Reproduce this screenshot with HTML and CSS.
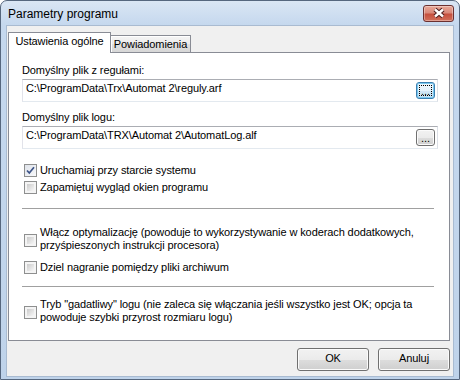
FILE: index.html
```html
<!DOCTYPE html>
<html lang="pl">
<head>
  <meta charset="UTF-8" />
  <title>Parametry programu</title>
  <link rel="stylesheet" href="styles.css">
</head>
<body>
  <div class="window">
    <div class="titlebar">
      <span class="title">Parametry programu</span>
      <button class="close" title="Zamknij">
        <svg width="29" height="15" viewBox="0 0 29 15">
          <path d="M11 3.5 L19 10.5 M19 3.5 L11 10.5" stroke="#4b1c1c" stroke-width="4.4" fill="none"/>
          <path d="M11 3.5 L19 10.5 M19 3.5 L11 10.5" stroke="#fff" stroke-width="2.4" fill="none"/>
        </svg>
      </button>
    </div>

    <div class="client">
      <div class="tabs">
        <div class="tab active">Ustawienia ogólne</div>
        <div class="tab">Powiadomienia</div>
      </div>

      <div class="panel">
        <label class="field-label">Domyślny plik z regułami:</label>
        <div class="path-box">
          <span class="value">C:\ProgramData\Trx\Automat 2\reguly.arf</span>
          <button class="browse focused">...</button>
        </div>

        <label class="field-label second">Domyślny plik logu:</label>
        <div class="path-box">
          <span class="value">C:\ProgramData\TRX\Automat 2\AutomatLog.alf</span>
          <button class="browse">...</button>
        </div>

        <div class="check-row first">
          <span class="box checked">
            <svg width="11" height="11" viewBox="0 0 11 11">
              <path d="M2 5.5 L4.3 8 L9 2.2" stroke="#3d5488" stroke-width="1.7" fill="none"/>
            </svg>
          </span>
          <span>Uruchamiaj przy starcie systemu</span>
        </div>
        <div class="check-row">
          <span class="box"></span>
          <span>Zapamiętuj wygląd okien programu</span>
        </div>

        <div class="sep"></div>

        <div class="check-row multi">
          <span class="box"></span>
          <span>Włącz optymalizację (powoduje to wykorzystywanie w koderach dodatkowych,<br>przyśpieszonych instrukcji procesora)</span>
        </div>
        <div class="check-row after-multi">
          <span class="box"></span>
          <span>Dziel nagranie pomiędzy pliki archiwum</span>
        </div>

        <div class="sep second"></div>

        <div class="check-row multi last">
          <span class="box"></span>
          <span>Tryb "gadatliwy" logu (nie zaleca się włączania jeśli wszystko jest OK; opcja ta<br>powoduje szybki przyrost rozmiaru logu)</span>
        </div>
      </div>

      <div class="actions">
        <button class="btn">OK</button>
        <button class="btn">Anuluj</button>
      </div>
    </div>
  </div>
</body>
</html>
```

FILE: styles.css
```css
* {
  box-sizing: border-box;
}
body {
  margin: 0;
  font-family: "Liberation Sans", Arial, sans-serif;
  font-size: 11px;
  letter-spacing: -0.1px;
  color: #000;
  background: #fff;
}
button {
  font-family: inherit;
  font-size: 11px;
  letter-spacing: inherit;
  color: #000;
  padding: 0;
  cursor: pointer;
}
.window {
  width: 460px;
  height: 380px;
  border: 1px solid #56677e;
  border-radius: 7px 7px 0 0;
  background: linear-gradient(#dae6f4, #c5d8ee 24px, #bfd3ea);
  padding: 0 5px 2px;
  display: flex;
  flex-direction: column;
}
.titlebar {
  height: 24px;
  flex: none;
  display: flex;
  align-items: flex-start;
  justify-content: space-between;
  padding-left: 2px;
}
.title {
  font-size: 12px;
  letter-spacing: 0;
  line-height: 24px;
  margin-top: 1px;
}
.close {
  width: 31px;
  height: 17px;
  margin-top: 4px;
  border: 1px solid #6b3030;
  border-radius: 3px;
  background: linear-gradient(#e9a898, #d9897a 45%, #c6503e 55%, #d2705b);
  box-shadow: inset 0 0 0 1px rgba(255, 255, 255, 0.35);
  display: flex;
  align-items: center;
  justify-content: center;
}
.close svg {
  display: block;
}
.client {
  flex: 1;
  background: #f0f0f0;
  border: 1px solid #a9bbd1;
  padding: 6px 3px 5px 1px;
  display: flex;
  flex-direction: column;
}

/* tabs */
.tabs {
  display: flex;
  align-items: flex-end;
  height: 21px;
  flex: none;
  position: relative;
  z-index: 1;
}
.tab {
  width: 80px;
  height: 17px;
  margin-bottom: 1px;
  border: 1px solid #898c95;
  border-bottom: none;
  border-left: none;
  background: linear-gradient(#f5f5f5, #ececec 50%, #e0e0e0 51%, #d7d7d7);
  box-shadow: inset 1px 1px 0 #fff;
  text-align: center;
  line-height: 13px;
  padding-top: 2px;
  white-space: nowrap;
}
.tab.active {
  width: 103px;
  height: 21px;
  margin-bottom: 0;
  border-left: 1px solid #898c95;
  background: #fff;
  box-shadow: none;
}
.panel {
  flex: none;
  height: 289px;
  margin-top: -1px;
  background: #fff;
  border: 1px solid #898c95;
  padding: 11px 11px 0 13px;
}

/* file fields */
.field-label {
  display: block;
  line-height: 13px;
  margin-bottom: 2px;
}
.field-label.second {
  margin-top: 9px;
}
.path-box {
  display: flex;
  align-items: flex-start;
  height: 23px;
  border: 1px solid;
  border-color: #abadb3 #dbdfe6 #e3e9ef #e2e3ea;
  padding-left: 3px;
}
.path-box .value {
  flex: 1;
  line-height: 17px;
  white-space: nowrap;
}
.browse {
  width: 19px;
  height: 17px;
  margin: 2px 2px 0 0;
  border: 1px solid #707070;
  border-radius: 3px;
  background: linear-gradient(#f2f2f2, #ebebeb 50%, #dddddd 51%, #cfcfcf);
  box-shadow: inset 0 0 0 1px #fbfbfb;
  line-height: 17px;
  text-align: center;
}
.browse.focused {
  border-color: #3c7fb1;
  background: linear-gradient(#f0f7fc, #e4f1fa 50%, #d2e7f6 51%, #c3dff3);
  box-shadow: inset 0 0 0 1px #79c9f0;
  outline: 1px dotted #000;
  outline-offset: -4px;
}

/* checkboxes */
.check-row {
  display: flex;
  align-items: center;
  margin: 4px 0 0 2px;
  line-height: 13px;
  white-space: nowrap;
}
.check-row.first {
  margin-top: 15px;
}
.check-row.multi {
  margin-top: 17px;
}
.check-row.after-multi {
  margin-top: 9px;
}
.check-row.last {
  margin-top: 11px;
}
.multi .box {
  margin-top: 3px;
}
.box {
  width: 13px;
  height: 13px;
  flex: none;
  margin-right: 3px;
  border: 1px solid #8e8f8f;
  padding: 2px;
  background: linear-gradient(135deg, #cbcbcb, #f6f6f6) content-box, linear-gradient(#f4f4f4, #f4f4f4) padding-box;
  display: flex;
  align-items: center;
  justify-content: center;
}
.box.checked {
  padding: 0;
  background: linear-gradient(135deg, #dfe3ea, #f8f9fb);
}
.box svg {
  display: block;
}
.sep {
  height: 1px;
  margin: 14px 4px 0 0;
  background: #a0a0a0;
}
.sep.second {
  margin-top: 12px;
}

/* dialog buttons */
.actions {
  display: flex;
  justify-content: flex-end;
  gap: 9px;
  margin-top: 7px;
}
.btn {
  width: 72px;
  height: 23px;
  border: 1px solid #707070;
  border-radius: 3px;
  background: linear-gradient(#f2f2f2, #ebebeb 50%, #dddddd 51%, #cfcfcf);
  box-shadow: inset 0 0 0 1px #fbfbfb;
  line-height: 18px;
  padding-bottom: 3px;
}
```
